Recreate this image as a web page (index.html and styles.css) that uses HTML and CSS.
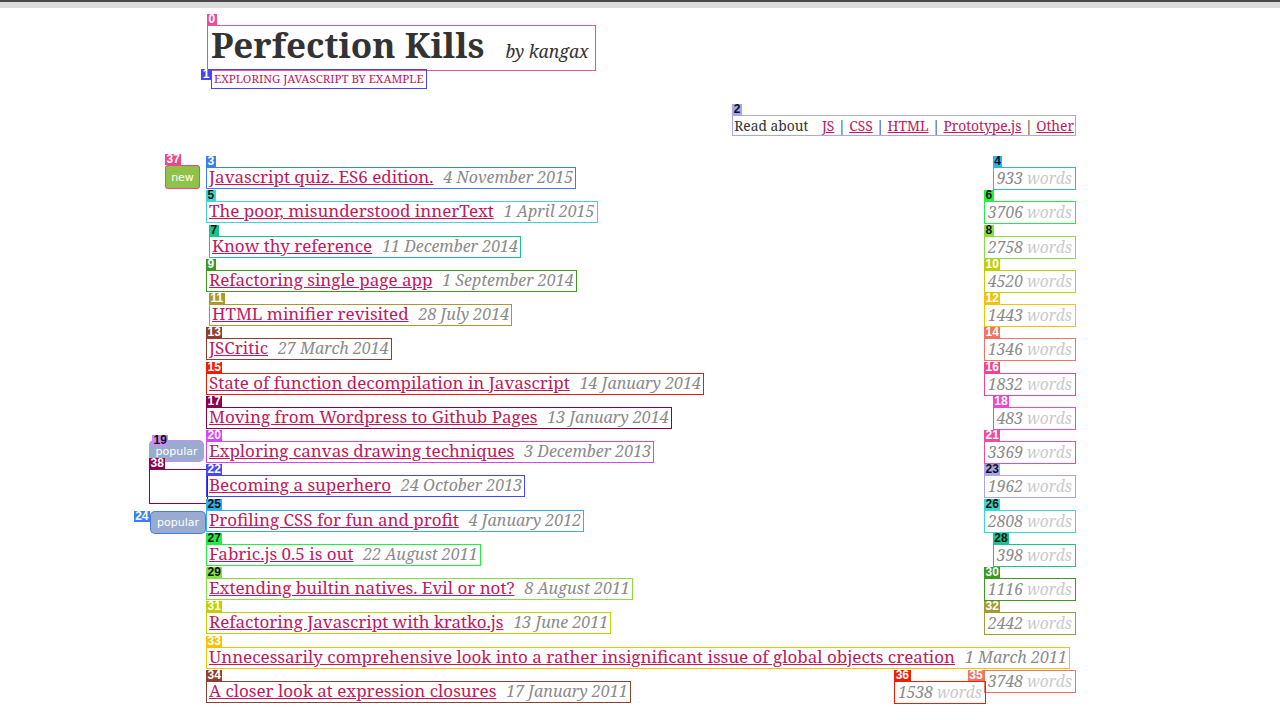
FILE: index.html
```html
<!DOCTYPE html>
<html lang="en">
<head>
<meta charset="utf-8">
<title>Perfection Kills</title>
<link rel="stylesheet" href="styles.css">
</head>
<body>
<div class="topbar"></div>
<div class="page">
  <header class="masthead">
    <h1 class="brand box c0"><span class="tag">0</span>Perfection Kills <small>by kangax</small></h1>
    <p class="tagline box c1"><span class="tag side">1</span>Exploring Javascript by example</p>
  </header>
  <nav class="topics">
    <div class="topic-list box c2"><span class="tag ink">2</span><span class="lead">Read about</span> <a href="#">JS</a> | <a href="#">CSS</a> | <a href="#">HTML</a> | <a href="#">Prototype.js</a> | <a href="#">Other</a></div>
  </nav>
  <ul class="posts">
    <li class="post">
      <span class="flag flag-new box c16"><span class="tag">37</span>new</span>
      <span class="entry box c3"><span class="tag">3</span><a href="#">Javascript quiz. ES6 edition.</a> <em class="date">4 November 2015</em></span><span class="words box c4"><span class="tag ink">4</span>933 <span class="unit">words</span></span>
    </li>
    <li class="post">
      <span class="entry box c5"><span class="tag ink">5</span><a href="#">The poor, misunderstood innerText</a> <em class="date">1 April 2015</em></span><span class="words box c6"><span class="tag ink">6</span>3706 <span class="unit">words</span></span>
    </li>
    <li class="post">
      <span class="entry shift box c7"><span class="tag ink">7</span><a href="#">Know thy reference</a> <em class="date">11 December 2014</em></span><span class="words box c8"><span class="tag ink">8</span>2758 <span class="unit">words</span></span>
    </li>
    <li class="post">
      <span class="entry box c9"><span class="tag">9</span><a href="#">Refactoring single page app</a> <em class="date">1 September 2014</em></span><span class="words box c10"><span class="tag">10</span>4520 <span class="unit">words</span></span>
    </li>
    <li class="post">
      <span class="entry shift box c11"><span class="tag">11</span><a href="#">HTML minifier revisited</a> <em class="date">28 July 2014</em></span><span class="words box c12"><span class="tag">12</span>1443 <span class="unit">words</span></span>
    </li>
    <li class="post">
      <span class="entry box c13"><span class="tag">13</span><a href="#">JSCritic</a> <em class="date">27 March 2014</em></span><span class="words box c14"><span class="tag">14</span>1346 <span class="unit">words</span></span>
    </li>
    <li class="post">
      <span class="entry box c15"><span class="tag">15</span><a href="#">State of function decompilation in Javascript</a> <em class="date">14 January 2014</em></span><span class="words box c16"><span class="tag">16</span>1832 <span class="unit">words</span></span>
    </li>
    <li class="post">
      <span class="entry box c17"><span class="tag">17</span><a href="#">Moving from Wordpress to Github Pages</a> <em class="date">13 January 2014</em></span><span class="words box c18"><span class="tag">18</span>483 <span class="unit">words</span></span>
    </li>
    <li class="post">
      <span class="flag flag-popular box c19"><span class="tag ink tag-over">19</span>popular</span>
      <span class="entry box c20"><span class="tag">20</span><a href="#">Exploring canvas drawing techniques</a> <em class="date">3 December 2013</em></span><span class="words box c0"><span class="tag">21</span>3369 <span class="unit">words</span></span>
    </li>
    <li class="post">
      <span class="flag flag-empty box c17"><span class="tag">38</span></span>
      <span class="entry box c1"><span class="tag">22</span><a href="#">Becoming a superhero</a> <em class="date">24 October 2013</em></span><span class="words box c2"><span class="tag ink">23</span>1962 <span class="unit">words</span></span>
    </li>
    <li class="post">
      <span class="flag flag-popular2 box c3"><span class="tag side">24</span>popular</span>
      <span class="entry box c4"><span class="tag ink">25</span><a href="#">Profiling CSS for fun and profit</a> <em class="date">4 January 2012</em></span><span class="words box c5"><span class="tag ink">26</span>2808 <span class="unit">words</span></span>
    </li>
    <li class="post">
      <span class="entry box c6"><span class="tag ink">27</span><a href="#">Fabric.js 0.5 is out</a> <em class="date">22 August 2011</em></span><span class="words box c7"><span class="tag ink">28</span>398 <span class="unit">words</span></span>
    </li>
    <li class="post">
      <span class="entry box c8"><span class="tag ink">29</span><a href="#">Extending builtin natives. Evil or not?</a> <em class="date">8 August 2011</em></span><span class="words box c9"><span class="tag">30</span>1116 <span class="unit">words</span></span>
    </li>
    <li class="post">
      <span class="entry box c10"><span class="tag">31</span><a href="#">Refactoring Javascript with kratko.js</a> <em class="date">13 June 2011</em></span><span class="words box c11"><span class="tag">32</span>2442 <span class="unit">words</span></span>
    </li>
    <li class="post">
      <span class="entry box c12"><span class="tag">33</span><a href="#">Unnecessarily comprehensive look into a rather insignificant issue of global objects creation</a> <em class="date">1 March 2011</em></span><span class="words box c14"><span class="tag side">35</span>3748 <span class="unit">words</span></span>
    </li>
    <li class="post">
      <span class="entry box c13"><span class="tag">34</span><a href="#">A closer look at expression closures</a> <em class="date">17 January 2011</em></span><span class="words box c15"><span class="tag">36</span>1538 <span class="unit">words</span></span>
    </li>
  </ul>
</div>
</body>
</html>
```
FILE: styles.css
```css
* { box-sizing: border-box; }

body {
  margin: 0;
  background: #fff;
  color: #333;
  font-family: "Noto Serif", "DejaVu Serif", serif;
}

.topbar {
  height: 8px;
  background: #dcdcdc;
  border-top: 2px solid #484848;
}

.page {
  width: 868px;
  margin-left: calc(50% - 433px);
  padding-top: 18px;
}

/* debug annotation boxes */
.box { position: relative; box-shadow: 0 0 0 1px var(--c); }
.tag {
  position: absolute;
  left: -1px;
  bottom: 100%;
  margin-bottom: 1px;
  padding: 0 1.5px;
  background: var(--c);
  color: #fff;
  font: bold 12px/11px "Liberation Sans", Arial, sans-serif;
  font-style: normal;
  white-space: nowrap;
  text-decoration: none;
}
.tag.ink { color: #111; }
.tag.side { bottom: auto; top: -1px; left: auto; right: 100%; margin: 0 1px 0 0; }
.tag.tag-over { bottom: auto; top: -6px; left: 2px; margin: 0; }

.c0 { --c: #f04c9e; }
.c1 { --c: #4646f5; }
.c2 { --c: #a6a6f2; }
.c3 { --c: #3a7ef2; }
.c4 { --c: #2fb2f2; }
.c5 { --c: #3ed6d0; }
.c6 { --c: #22f040; }
.c7 { --c: #18c38e; }
.c8 { --c: #86e040; }
.c9 { --c: #3c9a1e; }
.c10 { --c: #c2d000; }
.c11 { --c: #a89a32; }
.c12 { --c: #f5c300; }
.c13 { --c: #8c4030; }
.c14 { --c: #f27364; }
.c15 { --c: #f01e00; }
.c16 { --c: #f0468c; }
.c17 { --c: #8c0050; }
.c18 { --c: #f046d2; }
.c19 { --c: #c88cf5; }
.c20 { --c: #d246f5; }

/* header */
.brand {
  display: inline-block;
  margin: 0 0 0 1px;
  padding: 0 6px 6px 3px;
  font-size: 35px;
  line-height: 38px;
  height: 44px;
  font-weight: bold;
  color: #333;
}
.brand small {
  font-size: 17.5px;
  line-height: 38px;
  font-style: italic;
  font-weight: normal;
  margin-left: 12px;
}
.tagline {
  width: fit-content;
  margin: 0 0 0 5px;
  padding: 0 2px;
  font-size: 11.5px;
  line-height: 18px;
  text-transform: uppercase;
  color: #c2185b;
}

.topics {
  display: flex;
  justify-content: flex-end;
  margin-top: 28px;
}
.topic-list {
  font-size: 13.8px;
  line-height: 19px;
  padding: 0 1px;
  color: #333;
}
.topic-list .lead { margin-right: 10px; }
.topic-list a { color: #c2185b; }

/* posts */
.posts {
  list-style: none;
  margin: 33px 0 0;
  padding: 0;
}
.post {
  position: relative;
  height: 34.27px;
  font-size: 15px;
  line-height: 23px;
}
.entry {
  display: inline-block;
  vertical-align: top;
  line-height: 18px;
  padding: 0 2px 2px;
  white-space: nowrap;
}
.entry.shift { margin-left: 3px; }
.entry a { color: #c2185b; font-size: 17px; }
.date { color: #8a8a8a; font-size: 16px; margin-left: 6px; }

.words {
  float: right;
  line-height: 21px;
  padding: 0 3px;
  font-size: 15.6px;
  font-style: italic;
  color: #8a8a8a;
}
.words .unit { color: #cacaca; }

.flag {
  position: absolute;
  display: flex;
  align-items: center;
  justify-content: center;
  color: #fff;
  font: 11px/1 "DejaVu Sans", sans-serif;
}
.flag-new { top: -2px; right: calc(100% + 8px); width: 33px; height: 22px; background: #90c24a; border-radius: 2px; }
.flag-popular { top: -1px; right: calc(100% + 4px); width: 53px; height: 20px; background: #9aabcf; border-radius: 4px; }
.flag-popular2 { top: 1px; right: calc(100% + 2px); width: 54px; height: 21px; background: #9aabcf; border-radius: 4px; }
.flag-empty { top: -6px; right: 100%; width: 57px; height: 33px; }
```
